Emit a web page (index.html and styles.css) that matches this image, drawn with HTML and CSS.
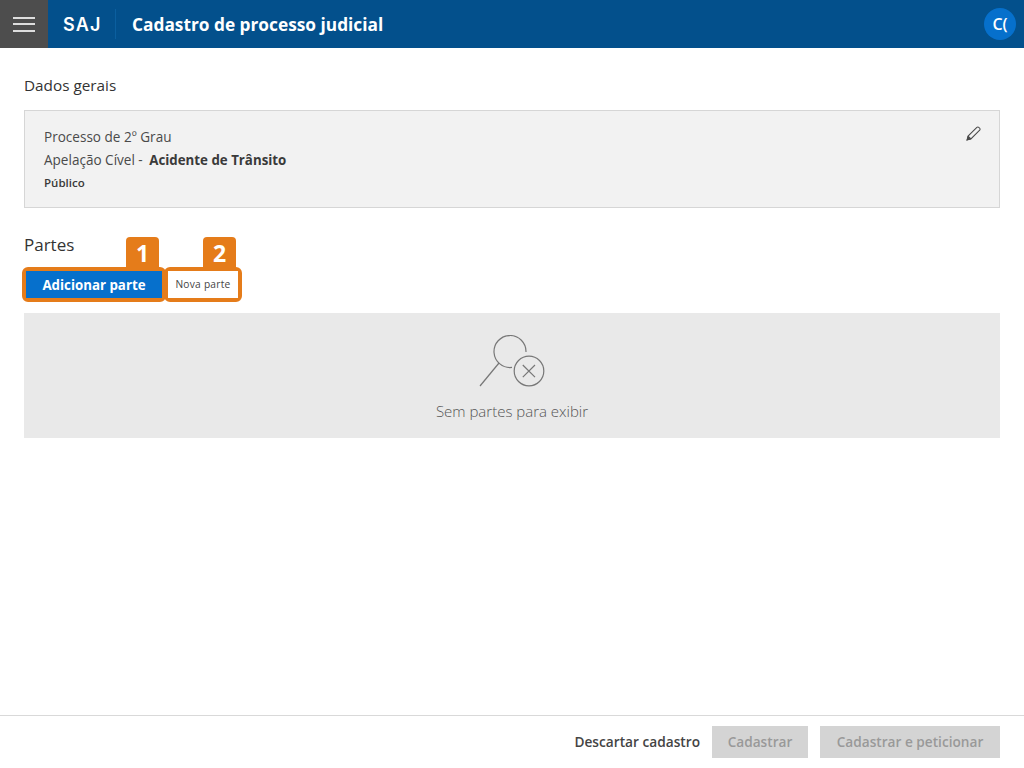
FILE: index.html
```html
<!DOCTYPE html>
<html lang="pt-BR">
<head>
<meta charset="utf-8">
<title>Cadastro de processo judicial</title>
<link rel="stylesheet" href="styles.css">
</head>
<body>
<div class="page">
  <header class="topbar">
    <button class="menu" aria-label="Menu"><span></span><span></span><span></span></button>
    <div class="brand">SAJ</div>
    <h1 class="title">Cadastro de processo judicial</h1>
    <div class="avatar">C(</div>
  </header>
  <main class="content">
    <h2 class="section-title first">Dados gerais</h2>
    <section class="summary">
      <div class="summary-text">
        <p class="line">Processo de 2º Grau</p>
        <p class="line">Apelação Cível - <strong>Acidente de Trânsito</strong></p>
        <p class="small">Público</p>
      </div>
      <svg class="pencil" width="15" height="15" viewBox="0 0 16 16" fill="none" stroke="#4a4a4a" stroke-width="1.1">
        <path d="M1.200 14.800l1-4L11.600 1.400a1.400 1.400 0 0 1 2 0l1 1a1.400 1.400 0 0 1 0 2L5.200 13.800z"/>
        <path d="M2.200 10.800l3 3"/>
        <path d="M1.200 14.800l1-3 2 2z" fill="#4a4a4a"/>
      </svg>
    </section>
    <h2 class="section-title parts">Partes</h2>
    <div class="actions">
      <div class="mark mark-one">
        <span class="badge">1</span>
        <button class="btn-primary">Adicionar parte</button>
      </div>
      <div class="mark mark-two">
        <span class="badge">2</span>
        <button class="btn-link">Nova parte</button>
      </div>
    </div>
    <section class="empty">
      <svg class="empty-icon" width="66" height="52" viewBox="0 0 66 52" fill="none" stroke="#777" stroke-width="1.200">
        <path d="M47 17A16 16 0 1 0 33 32.400"/>
        <path d="M20 28L1 51"/>
        <circle cx="50" cy="36" r="14.800"/>
        <path d="M43.800 30l12.200 12.200M56 30L43.800 42.200"/>
      </svg>
      <p class="empty-text">Sem partes para exibir</p>
    </section>
  </main>
  <footer class="footer">
    <button class="btn-discard">Descartar cadastro</button>
    <button class="btn-disabled">Cadastrar</button>
    <button class="btn-disabled wide">Cadastrar e peticionar</button>
  </footer>
</div>
</body>
</html>
```
FILE: styles.css
```css
* { box-sizing: border-box; }
html, body { margin: 0; height: 100%; }
body { font-family: "Open Sans", "Noto Sans", sans-serif; color: #333; background: #fff; }
.page { height: 768px; display: flex; flex-direction: column; overflow: hidden; }
.topbar { height: 48px; background: #03508c; display: flex; align-items: center; color: #fff; flex: none; }
.menu { width: 48px; height: 48px; background: #4d4d4d; border: 0; padding: 0; display: flex; flex-direction: column; justify-content: center; align-items: center; gap: 4.500px; }
.menu span { display: block; width: 22px; height: 2px; background: #ddd; }
.brand { font-family: Inter, "Open Sans", sans-serif; font-size: 18px; font-weight: 600; letter-spacing: 1.200px; margin-left: 15px; width: 53px; height: 30px; line-height: 31px; border-right: 1px solid #0b5f9f; }
.title { margin: 0 0 0 16px; font-size: 17.300px; font-weight: 700; }
.avatar { margin-left: auto; margin-right: 8px; width: 32px; height: 32px; border-radius: 50%; background: #0670cc; text-align: center; line-height: 32px; font-size: 16px; font-weight: 600; }
.content { flex: 1; padding: 0 24px; }
.section-title { margin: 0; font-weight: 400; color: #333; }
.section-title.first { font-size: 15.300px; line-height: 20px; padding-top: 27px; margin-bottom: 15px; }
.summary { height: 98px; background: #f2f2f2; border: 1px solid #d6d6d6; padding: 15px 19px; position: relative; }
.line { margin: 0; font-size: 13.550px; line-height: 23px; color: #4a4a4a; }
.line strong { color: #3a3a3a; font-weight: 700; font-size: 13.300px; margin-left: 3px; }
.small { margin: 0; font-size: 11.500px; line-height: 22px; color: #3a3a3a; font-weight: 600; }
.pencil { position: absolute; top: 15px; right: 18px; }
.parts { font-size: 17px; line-height: 22px; padding-top: 26px; }
.actions { display: flex; margin-top: 11px; margin-left: -2px; height: 35px; }
.mark { position: relative; border: 4px solid #e57c1a; border-radius: 6px; height: 35px; }
.mark-one { width: 144px; }
.mark-two { width: 78px; margin-left: -2px; background: #fff; }
.badge { position: absolute; top: -34px; width: 33px; height: 31px; background: #e57c1a; color: #fff; border-radius: 4px 4px 0 0; text-align: center; font-size: 23px; font-weight: 700; line-height: 32px; }
.mark-one .badge { left: 100px; }
.mark-two .badge { left: 35px; }
.btn-primary { display: block; width: 100%; height: 100%; padding: 1px 0 0; background: #0670cc; color: #fff; border: 0; font: 700 13.300px/26px "Open Sans", sans-serif; }
.btn-link { display: block; width: 100%; height: 100%; padding: 0; background: #fff; color: #444; border: 0; font: 400 10.200px/27px "Open Sans", sans-serif; letter-spacing: .25px; }
.empty { margin-top: 11px; height: 125px; background: #e9e9e9; display: flex; flex-direction: column; align-items: center; padding-top: 22px; }
.empty-icon { display: block; }
.empty-text { margin: 14px 0 0; font-size: 15px; line-height: 20px; font-weight: 300; color: #555; }
.footer { flex: none; height: 53px; border-top: 1px solid #d9d9d9; display: flex; justify-content: flex-end; align-items: flex-start; padding: 10px 24px 0 0; }
.btn-discard { height: 32px; padding: 0; border: 0; background: none; color: #444; font: 600 13.700px/32px "Open Sans", sans-serif; margin-right: 12px; }
.btn-disabled { height: 32px; border: 0; padding: 0; background: #d4d4d4; color: #999; font: 600 13.650px/32px "Open Sans", sans-serif; width: 96px; }
.btn-disabled.wide { width: 180px; margin-left: 12px; }
```
